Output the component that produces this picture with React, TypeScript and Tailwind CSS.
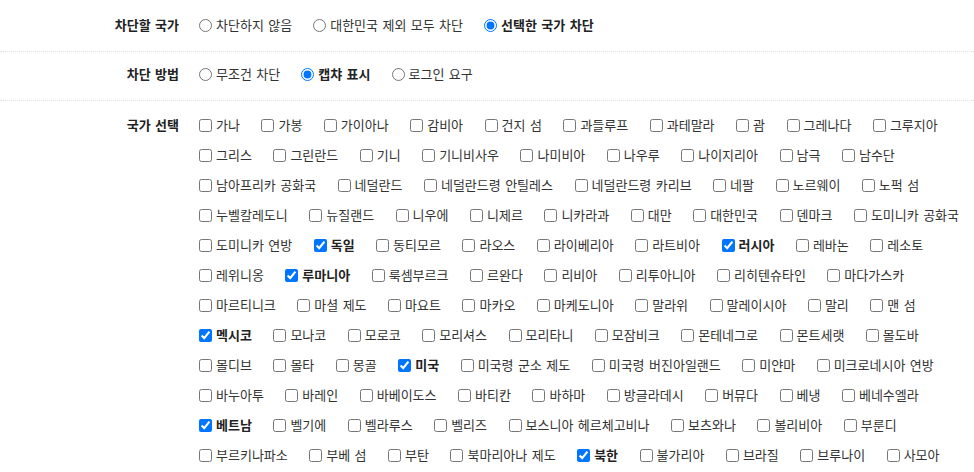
import React from 'react';

type Country = { name: string; checked?: boolean };

const rows: Country[][] = [
	[{ name: '가나' }, { name: '가봉' }, { name: '가이아나' }, { name: '감비아' }, { name: '건지 섬' }, { name: '과들루프' }, { name: '과테말라' }, { name: '괌' }, { name: '그레나다' }, { name: '그루지아' }],
	[{ name: '그리스' }, { name: '그린란드' }, { name: '기니' }, { name: '기니비사우' }, { name: '나미비아' }, { name: '나우루' }, { name: '나이지리아' }, { name: '남극' }, { name: '남수단' }],
	[{ name: '남아프리카 공화국' }, { name: '네덜란드' }, { name: '네덜란드령 안틸레스' }, { name: '네덜란드령 카리브' }, { name: '네팔' }, { name: '노르웨이' }, { name: '노퍽 섬' }],
	[{ name: '누벨칼레도니' }, { name: '뉴질랜드' }, { name: '니우에' }, { name: '니제르' }, { name: '니카라과' }, { name: '대만' }, { name: '대한민국' }, { name: '덴마크' }, { name: '도미니카 공화국' }],
	[{ name: '도미니카 연방' }, { name: '독일', checked: true }, { name: '동티모르' }, { name: '라오스' }, { name: '라이베리아' }, { name: '라트비아' }, { name: '러시아', checked: true }, { name: '레바논' }, { name: '레소토' }],
	[{ name: '레위니옹' }, { name: '루마니아', checked: true }, { name: '룩셈부르크' }, { name: '르완다' }, { name: '리비아' }, { name: '리투아니아' }, { name: '리히텐슈타인' }, { name: '마다가스카' }],
	[{ name: '마르티니크' }, { name: '마셜 제도' }, { name: '마요트' }, { name: '마카오' }, { name: '마케도니아' }, { name: '말라위' }, { name: '말레이시아' }, { name: '말리' }, { name: '맨 섬' }],
	[{ name: '멕시코', checked: true }, { name: '모나코' }, { name: '모로코' }, { name: '모리셔스' }, { name: '모리타니' }, { name: '모잠비크' }, { name: '몬테네그로' }, { name: '몬트세랫' }, { name: '몰도바' }],
	[{ name: '몰디브' }, { name: '몰타' }, { name: '몽골' }, { name: '미국', checked: true }, { name: '미국령 군소 제도' }, { name: '미국령 버진아일랜드' }, { name: '미얀마' }, { name: '미크로네시아 연방' }],
	[{ name: '바누아투' }, { name: '바레인' }, { name: '바베이도스' }, { name: '바티칸' }, { name: '바하마' }, { name: '방글라데시' }, { name: '버뮤다' }, { name: '베냉' }, { name: '베네수엘라' }],
	[{ name: '베트남', checked: true }, { name: '벨기에' }, { name: '벨라루스' }, { name: '벨리즈' }, { name: '보스니아 헤르체고비나' }, { name: '보츠와나' }, { name: '볼리비아' }, { name: '부룬디' }],
	[{ name: '부르키나파소' }, { name: '부베 섬' }, { name: '부탄' }, { name: '북마리아나 제도' }, { name: '북한', checked: true }, { name: '불가리아' }, { name: '브라질' }, { name: '브루나이' }, { name: '사모아' }]
];

const Radio: React.FC<{ name: string; label: string; checked?: boolean }> = ({ name, label, checked }) => (
	<label className="flex shrink-0 items-center mr-[21px] whitespace-nowrap">
		<input type="radio" name={name} defaultChecked={checked} className="w-[13px] h-[13px] m-0 mr-[4px]" />
		<span className={checked ? 'font-bold text-[#222]' : ''}>{label}</span>
	</label>
);

export default function App() {
	return (
		<div
			className="w-[974px] overflow-hidden bg-white text-[13px] [word-spacing:1.5px] text-[#333] leading-[20px]"
			style={{ fontFamily: '"Malgun Gothic", "Noto Sans CJK KR", "Noto Sans", sans-serif' }}
		>
			<div className="flex border-b border-dotted border-[#e2e2e2] pt-[15px] pb-[16px]">
				<div className="w-[179px] shrink-0 text-right font-bold text-[#222]">차단할 국가</div>
				<div className="flex pl-[20px]">
					<Radio name="target" label="차단하지 않음" />
					<Radio name="target" label="대한민국 제외 모두 차단" />
					<Radio name="target" label="선택한 국가 차단" checked />
				</div>
			</div>

			<div className="flex border-b border-dotted border-[#e2e2e2] pt-[12px] pb-[16px]">
				<div className="w-[179px] shrink-0 text-right font-bold text-[#222]">차단 방법</div>
				<div className="flex pl-[20px]">
					<Radio name="method" label="무조건 차단" />
					<Radio name="method" label="캡챠 표시" checked />
					<Radio name="method" label="로그인 요구" />
				</div>
			</div>

			<div className="flex pt-[9px]">
				<div className="w-[179px] h-[30px] shrink-0 flex items-center justify-end font-bold text-[#222]">국가 선택</div>
				<div className="flex flex-col pl-[20px]">
					{rows.map((row, i) => (
						<div key={i} className="flex h-[30px] items-center">
							{row.map((c) => (
								<label key={c.name} className="flex shrink-0 items-center mr-[21.5px] whitespace-nowrap">
									<input
										type="checkbox"
										defaultChecked={c.checked}
										className="w-[13px] h-[13px] m-0 mr-[4px]"
									/>
									<span className={c.checked ? 'font-bold text-[#222]' : ''}>{c.name}</span>
								</label>
							))}
						</div>
					))}
				</div>
			</div>
		</div>
	);
}
